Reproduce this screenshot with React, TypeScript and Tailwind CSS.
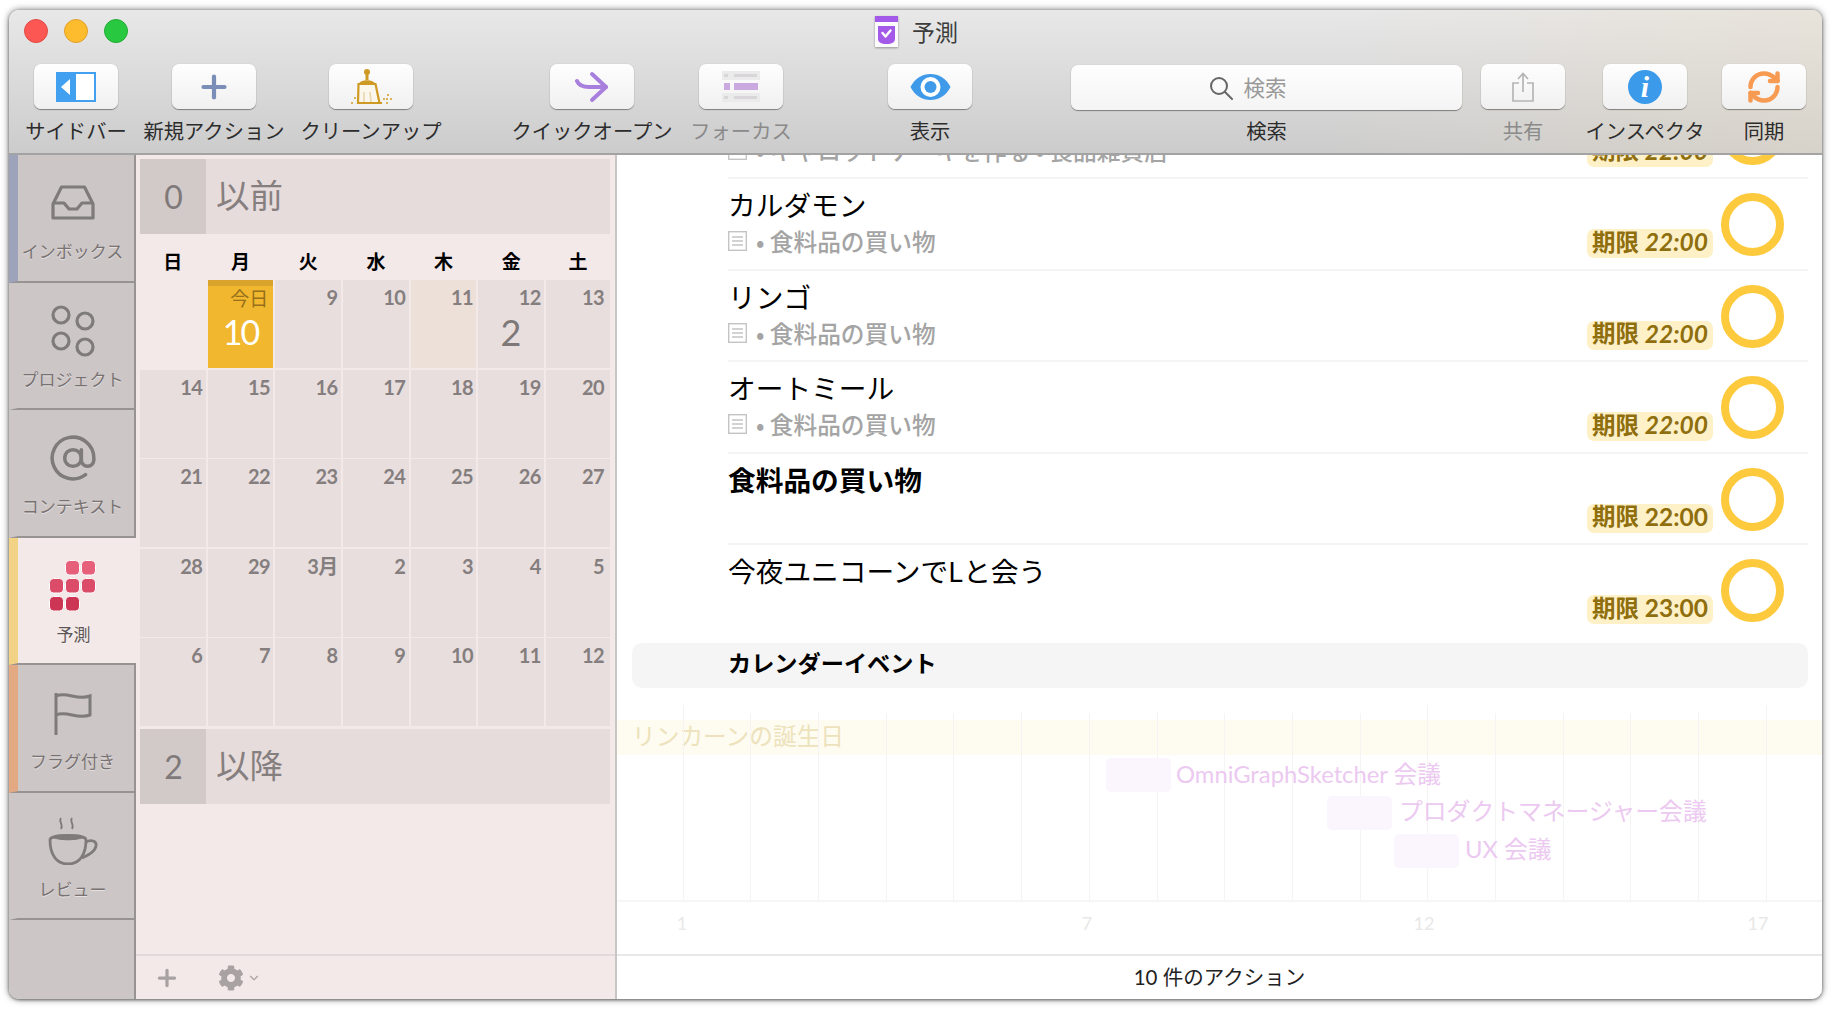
import React from "react";
import { AtSign, ChevronDown, Plus, RefreshCw } from "lucide-react";
import { FaCog } from "react-icons/fa";

const NUM = "font-['Lato','Noto_Sans_CJK_JP',sans-serif]";

function SidebarGlyph() {
  return (
    <svg width="40" height="30" viewBox="0 0 40 30">
      <rect width="40" height="30" fill="#42a0f0" />
      <rect x="20" y="2" width="18" height="26" fill="#fff" />
      <path d="M14 7v16L5 15z" fill="#fff" />
    </svg>
  );
}
function Broom() {
  return (
    <svg width="42" height="37" viewBox="0 0 42 37" fill="none">
      <circle cx="17" cy="4" r="3" fill="#cf9a24" />
      <rect x="15.5" y="4" width="3" height="8" fill="#cf9a24" />
      <path d="M9 16c1-5 15-5 16 0z" fill="#cf9a24" />
      <path d="M8.5 16h17l4 19H8z" stroke="#cf9a24" strokeWidth="2.2" fill="#fbf7ec" />
      <path d="M14 24v10M20 24l1 10" stroke="#e6d6a8" strokeWidth="1.5" />
      <path d="M7 35h25" stroke="#cf9a24" strokeWidth="2" />
      <g fill="#dcb256">
        <rect x="1" y="34" width="2" height="2" /><rect x="4" y="29" width="2" height="2" />
        <rect x="33" y="30" width="2" height="2" /><rect x="36" y="34" width="2" height="2" />
        <rect x="37" y="26" width="2" height="2" /><rect x="40" y="30" width="2" height="2" />
        <rect x="36" y="30" width="2" height="2" />
      </g>
    </svg>
  );
}
function QuickArrow() {
  return (
    <svg width="34" height="32" viewBox="0 0 34 32" fill="none" stroke="#a87fdc" strokeWidth="4" strokeLinecap="round" strokeLinejoin="round">
      <path d="M2 10c2 5 6 6 12 6h17" />
      <path d="M17 3l14 13-14 13" />
    </svg>
  );
}
function FocusGlyph() {
  return (
    <svg width="38" height="31" viewBox="0 0 38 31">
      <rect width="38" height="9" fill="#ecebec" />
      <rect x="12" y="3" width="23" height="3" fill="#d8d6d8" />
      <rect x="2" y="3" width="4" height="3" fill="#d8d6d8" />
      <rect x="2" y="12" width="6" height="7" fill="#c9a9df" />
      <rect x="12" y="12" width="24" height="7" fill="#c9a9df" />
      <rect y="22" width="38" height="9" fill="#ecebec" />
      <rect x="12" y="25" width="23" height="3" fill="#d8d6d8" />
      <rect x="2" y="25" width="4" height="3" fill="#d8d6d8" />
    </svg>
  );
}
function Eye() {
  return (
    <svg width="41" height="26" viewBox="0 0 41 26">
      <path d="M.5 13C9-4.300 32-4.300 40.500 13 32 30.300 9 30.300.5 13z" fill="#3f9bea" />
      <circle cx="20.500" cy="13" r="10" fill="#fff" />
      <circle cx="20.500" cy="13" r="6" fill="#3f9bea" />
    </svg>
  );
}
function Magnifier() {
  return (
    <svg width="24" height="24" viewBox="0 0 24 24" fill="none" stroke="#666" strokeWidth="2">
      <circle cx="10" cy="10" r="8" />
      <path d="M16 16l7 7" strokeLinecap="round" />
    </svg>
  );
}
function Share() {
  return (
    <svg width="22" height="30" viewBox="0 0 22 30" fill="none" stroke="#b5b5b5" strokeWidth="1.700">
      <path d="M7 11H1v18h20V11h-6" />
      <path d="M11 20V2M6 7l5-5.500L16 7" />
    </svg>
  );
}
function DocIcon() {
  return (
    <svg width="23" height="31" viewBox="0 0 23 31" className="drop-shadow-[0_1px_1px_rgba(0,0,0,0.35)]">
      <rect width="23" height="31" fill="#fbfbfb" />
      <rect width="23" height="6" fill="#a45ae8" />
      <path d="M3 10h17v13c0 3-3 5-8.500 5S3 26 3 23z" fill="#a45ae8" />
      <path d="M7.500 17l3 3.500 5-6" fill="none" stroke="#fff" strokeWidth="2.400" strokeLinecap="round" strokeLinejoin="round" />
    </svg>
  );
}
function Inbox() {
  return (
    <svg width="44" height="36" viewBox="0 0 44 36" fill="none" stroke="#7f7b7b" strokeWidth="3.200" strokeLinejoin="round">
      <path d="M2 19L10.500 2h23L42 19v14H2z" />
      <path d="M2 18h11l5 6h8l5-6h11" />
    </svg>
  );
}
function Projects() {
  return (
    <svg width="44" height="52" viewBox="0 0 44 52" fill="none" stroke="#7f7b7b" strokeWidth="3.200">
      <circle cx="10" cy="10" r="8" />
      <circle cx="34" cy="16" r="8" />
      <circle cx="10" cy="36" r="8" />
      <circle cx="34" cy="42" r="8" />
    </svg>
  );
}
function ForecastGrid() {
  const cells = [
    [16, 0, "#e7607a"], [32, 0, "#e7607a"],
    [0, 18, "#da4c67"], [16, 18, "#da4c67"], [32, 18, "#da4c67"],
    [0, 36, "#cc3553"], [16, 36, "#cc3553"],
  ] as const;
  return (
    <svg width="47" height="51" viewBox="0 0 47 51" className="-ml-[3px]">
      {cells.map(([x, y, c]) => (
        <rect key={`${x}-${y}`} x={x + 0.5} y={y + 0.5} width="14" height="14.500" rx="4" fill={c} stroke="#fff" strokeWidth="1" />
      ))}
    </svg>
  );
}
function Flag() {
  return (
    <svg width="38" height="43" viewBox="0 0 38 43" fill="none" stroke="#7f7b7b" strokeWidth="3">
      <path d="M2 1v42" />
      <path d="M2 4c11-5 21 5 34 0v19c-13 5-23-5-34 0" />
    </svg>
  );
}
function Cup() {
  return (
    <svg width="50" height="48" viewBox="0 0 50 48" fill="none" stroke="#7f7b7b" strokeWidth="2.800">
      <path d="M13 1c-3 4 3 6 0 11M24 1c-3 4 3 6 0 11" strokeWidth="1.800" />
      <path d="M2 23c0-6 36-6 36 0 0 14-6 24-18 24S2 37 2 23z" />
      <path d="M5 21c6-4 24-4 30 0-6 3-24 3-30 0z" fill="#7f7b7b" stroke="none" />
      <path d="M38 25c5-3 11-1 10 4-1 6-8 9-14 12" />
    </svg>
  );
}

function ToolItem({ label, icon, ml, dim }: { label: string; icon: React.ReactNode; ml: string; dim?: boolean }) {
  return (
    <div className={`flex w-[84px] shrink-0 flex-col items-center ${ml}`}>
      <div className="flex h-[45px] w-[84px] items-center justify-center rounded-[7px] bg-[linear-gradient(180deg,#fefefe,#f0f0f0)] shadow-[0_1px_1px_rgba(0,0,0,0.4),0_0_1px_rgba(0,0,0,0.2)]">
        {icon}
      </div>
      <div className={`mt-[9px] whitespace-nowrap text-[20.300px] leading-[24px] ${dim ? "text-[#8a8a8a]" : "text-[#2c2c2c]"}`}>{label}</div>
    </div>
  );
}

function Toolbar() {
  return (
    <div className="h-[145px] shrink-0 border-b-2 border-[#a3a3a3] bg-[linear-gradient(90deg,rgba(0,0,0,0)_72%,rgba(232,220,198,0.4)_100%),linear-gradient(180deg,#e8e8e9,#cccccc)]">
      <div className="grid h-[54px] grid-cols-[1fr_auto_1fr] pt-[6px]">
        <div className="flex gap-[16px] pl-[15px] pt-[3px]">
          <div className="h-[24px] w-[24px] rounded-full border border-[#e14942] bg-[#fc5753]" />
          <div className="h-[24px] w-[24px] rounded-full border border-[#e0a028] bg-[#fdbc2e]" />
          <div className="h-[24px] w-[24px] rounded-full border border-[#20ab36] bg-[#28c940]" />
        </div>
        <div className="flex items-start gap-[14px] pl-[2px]">
          <DocIcon />
          <span className="text-[23px] leading-[30px] text-[#3c3c3c]">予測</span>
        </div>
        <div />
      </div>
      <div className="flex pl-[25px]">
        <ToolItem ml="" label="サイドバー" icon={<SidebarGlyph />} />
        <ToolItem ml="ml-[54px]" label="新規アクション" icon={<Plus size={36} strokeWidth={2.800} color="#7b8eb8" />} />
        <ToolItem ml="ml-[73px]" label="クリーンアップ" icon={<Broom />} />
        <ToolItem ml="ml-[137px]" label="クイックオープン" icon={<QuickArrow />} />
        <ToolItem ml="ml-[65px]" label="フォーカス" dim icon={<FocusGlyph />} />
        <ToolItem ml="ml-[105px]" label="表示" icon={<Eye />} />
        <div className="ml-[99px] flex w-[391px] shrink-0 flex-col items-center">
          <div className="mt-[1px] flex h-[45px] w-[391px] items-center justify-center gap-[10px] rounded-[7px] bg-[linear-gradient(180deg,#fefefe,#f4f4f4)] pr-[37px] shadow-[0_1px_1px_rgba(0,0,0,0.4),0_0_1px_rgba(0,0,0,0.2)]">
            <Magnifier />
            <span className="text-[21.500px] text-[#9a9a9a]">検索</span>
          </div>
          <div className="mt-[8px] text-[20.300px] leading-[24px] text-[#2c2c2c]">検索</div>
        </div>
        <ToolItem ml="ml-[19px]" label="共有" dim icon={<Share />} />
        <ToolItem ml="ml-[38px]" label="インスペクタ" icon={
          <span className="flex h-[34px] w-[34px] items-center justify-center rounded-full bg-[#3b9aea] font-['Liberation_Serif',serif] text-[30px] font-bold italic leading-none text-white">i</span>
        } />
        <ToolItem ml="ml-[35px]" label="同期" icon={<RefreshCw size={36} strokeWidth={3} color="#f79a52" />} />
      </div>
    </div>
  );
}

function Tab({ label, icon, strip, active }: { label: string; icon: React.ReactNode; strip: string; active?: boolean }) {
  return (
    <div className={`flex h-[127.500px] w-[127px] shrink-0 flex-col items-center border-b-2 border-b-[#979393] border-l-[9px] pr-[7px] pt-[17px] ${strip} ${active ? "bg-[#f3e9e8]" : "border-r-2 border-r-[#979393] bg-[#cdc6c6]"}`}>
      <div className="flex h-[62px] items-center justify-center">{icon}</div>
      <div className={`mt-[6px] whitespace-nowrap text-[17px] leading-[22px] [text-shadow:0_1px_0_rgba(255,255,255,0.5)] ${active ? "text-[#5c5656]" : "text-[#787272]"}`}>{label}</div>
    </div>
  );
}

function Sidebar() {
  return (
    <div className="flex w-[127px] shrink-0 flex-col bg-[#cdc6c6]">
      <Tab label="インボックス" icon={<Inbox />} strip="border-l-[#9ca3bb]" />
      <Tab label="プロジェクト" icon={<Projects />} strip="border-l-[#cdc6c6]" />
      <Tab label="コンテキスト" icon={<AtSign size={50} strokeWidth={1.700} color="#7f7b7b" />} strip="border-l-[#cdc6c6]" />
      <Tab label="予測" active icon={<ForecastGrid />} strip="border-l-[#f2d285]" />
      <Tab label="フラグ付き" icon={<Flag />} strip="border-l-[#e2a982]" />
      <Tab label="レビュー" icon={<Cup />} strip="border-l-[#cdc6c6]" />
      <div className="flex-1 border-r-2 border-r-[#979393]" />
    </div>
  );
}

const weekdays = ["日", "月", "火", "水", "木", "金", "土"];
const dates = [
  "", "今日", "9", "10", "11", "12", "13",
  "14", "15", "16", "17", "18", "19", "20",
  "21", "22", "23", "24", "25", "26", "27",
  "28", "29", "3月", "2", "3", "4", "5",
  "6", "7", "8", "9", "10", "11", "12",
];
const COLS = "grid-cols-[65.700px_65.700px_65.700px_65.700px_65.700px_65.700px_minmax(0,1fr)]";

function DayCell({ value, index }: { value: string; index: number }) {
  if (index === 0) return <div />;
  if (index === 1) {
    return (
      <div className="border-t-[6px] border-[#d9a32c] bg-[#f1b82f] pr-[5px] text-right">
        <div className="h-[23px] text-[19px] leading-[23px] text-[#96701a]">今日</div>
        <div className={`mt-[4px] pl-[5px] text-center text-[34px] leading-[38px] tracking-[-2px] text-white ${NUM}`}>10</div>
      </div>
    );
  }
  const tint = index === 4 ? "bg-[#ece0d9]" : "bg-[#e8dede]";
  const pad = index % 7 === 6 ? "pr-[6px]" : "pr-[3.500px]";
  return (
    <div className={`${tint} ${pad} pt-[5px] text-right ${NUM}`}>
      <div className="text-[20px] font-bold leading-[24px] tracking-[-0.6px] text-[#857e7e]">{value}</div>
      {index === 5 && <div className="mt-[4px] pl-[3px] text-center text-[36px] leading-[38px] text-[#7e7878]">2</div>}
    </div>
  );
}

function Band({ n, label, className }: { n: string; label: string; className?: string }) {
  return (
    <div className={`flex h-[75px] ${className ?? ""}`}>
      <div className={`flex w-[66px] items-center justify-center pl-[1px] text-[32px] text-[#7f7979] ${NUM}`}>{n}</div>
      <div className="pl-[10px] text-[33.500px] leading-[70px] text-[#867f7f]">{label}</div>
    </div>
  );
}

function Forecast() {
  return (
    <div className="flex w-[481px] shrink-0 flex-col border-r-2 border-[#c9c5c5] bg-[#f3e9e8]">
      <div className="flex-1 pl-[4px] pr-[5px] pt-[4px]">
        <Band n="0" label="以前" className="bg-[linear-gradient(90deg,#d2c9c9_66px,#e7dcdc_66px)]" />
        <div className={`grid h-[46px] ${COLS} gap-x-[2px] pt-[8px]`}>
          {weekdays.map((d) => (
            <div key={d} className="flex items-center justify-center text-[19px] font-bold text-black">{d}</div>
          ))}
        </div>
        <div className={`grid auto-rows-[88px] ${COLS} gap-x-[2px] gap-y-[1.500px]`}>
          {dates.map((d, i) => (
            <DayCell key={i} value={d} index={i} />
          ))}
        </div>
        <Band n="2" label="以降" className="mt-[3px] bg-[linear-gradient(90deg,#d2c9c9_66px,#e7dcdc_66px)]" />
      </div>
      <div className="flex h-[45px] shrink-0 items-center border-t-2 border-[#e2dada] pl-[18px]">
        <Plus size={26} strokeWidth={3} color="#a8a2a2" />
        <FaCog size={26} color="#a8a2a2" className="ml-[38px]" />
        <ChevronDown size={14} strokeWidth={2} color="#a8a2a2" className="ml-[3px]" />
      </div>
    </div>
  );
}

function Note() {
  return (
    <svg width="19" height="20" viewBox="0 0 19 20" fill="none" stroke="#c4c4c4" strokeWidth="1.400" className="shrink-0">
      <rect x=".7" y=".7" width="17.600" height="18.600" />
      <path d="M4 6h11M4 10h11M4 14h11" />
    </svg>
  );
}

function Row({ title, sub, time, bold, italic = true, noLine }: { title?: string; sub?: string; time: string; bold?: boolean; italic?: boolean; noLine?: boolean }) {
  return (
    <div className={`flex h-[91.500px] shrink-0 ${noLine ? "" : "border-b-2 border-[#f4f4f4]"}`}>
      <div className="min-w-0 flex-1">
        <div className={`mt-[7px] h-[36px] text-[27.700px] leading-[36px] text-black ${bold ? "font-bold" : ""}`}>{title}</div>
        {sub && (
          <div className="mt-[4px] flex h-[30px] items-center">
            <Note />
            <span className="ml-[9px] text-[23.700px] font-medium leading-[30px] text-[#a4a4a4]">• {sub}</span>
          </div>
        )}
      </div>
      <div className={`mt-[50px] flex h-[29px] items-center self-start rounded-[7px] bg-[#fef1c8] px-[5px] pb-[2px] text-[23.500px] font-semibold text-[#8f6e0d] ${NUM}`}>
        <span>期限&nbsp;</span>
        <span className={`text-[24.500px] font-bold ${italic ? "italic" : ""}`}>{time}</span>
      </div>
      <div className="ml-[8px] mr-[24px] mt-[14px] h-[63px] w-[63px] shrink-0 rounded-full border-[8px] border-[#fdc93d]" />
    </div>
  );
}

const gridLines = Array.from({ length: 17 }, (_, i) => ({
  x: 65.600 + i * 67.700,
  long: i === 0 || i === 11 || i === 16,
}));
const axis = [
  { x: 65, t: "1" },
  { x: 470, t: "7" },
  { x: 807, t: "12" },
  { x: 1141, t: "17" },
];
const events = [
  { box: 489, top: 70, text: 559, y: 69, label: "OmniGraphSketcher 会議" },
  { box: 710, top: 108, text: 782, y: 106, label: "プロダクトマネージャー会議" },
  { box: 777, top: 146, text: 848, y: 144, label: "UX 会議" },
];

function Timeline() {
  return (
    <div className={`relative flex-1 ${NUM}`}>
      <div className="absolute left-0 right-0 top-[32px] h-[35px] bg-[#fefcf1] pl-[15px] text-[23.700px] leading-[32px] text-[#ede2bb]">リンカーンの誕生日</div>
      {gridLines.map((l) => (
        <div key={l.x} className="absolute w-[1px] bg-[#f4f4f4]" style={{ left: l.x, top: l.long ? 17 : 25, height: l.long ? 195 : 187 }} />
      ))}
      {events.map((e) => (
        <React.Fragment key={e.label}>
          <div className="absolute h-[34px] w-[65px] rounded-[5px] bg-[#fbf5fd]" style={{ left: e.box, top: e.top }} />
          <div className="absolute whitespace-nowrap text-[23.800px] leading-[34px] text-[#ecc9f1]" style={{ left: e.text, top: e.y }}>{e.label}</div>
        </React.Fragment>
      ))}
      <div className="absolute left-0 right-0 top-[212px] h-[2px] bg-[#f6f6f6]" />
      {axis.map((a) => (
        <div key={a.t} className="absolute top-[224px] -translate-x-1/2 text-[18px] leading-[22px] text-[#e8e8e8]" style={{ left: a.x }}>{a.t}</div>
      ))}
    </div>
  );
}

function Detail() {
  return (
    <div className="flex min-w-0 flex-1 flex-col overflow-hidden bg-white">
      <div className="flex min-h-0 flex-1 flex-col overflow-hidden">
        <div className="mt-[-67.500px] flex flex-col pl-[111px] pr-[14px]">
          <Row sub="キャロットケーキを作る • 食品雑貨店" time="22:00" />
          <Row title="カルダモン" sub="食料品の買い物" time="22:00" />
          <Row title="リンゴ" sub="食料品の買い物" time="22:00" />
          <Row title="オートミール" sub="食料品の買い物" time="22:00" />
          <Row title="食料品の買い物" bold italic={false} time="22:00" />
          <Row title="今夜ユニコーンでLと会う" time="23:00" italic={false} noLine />
        </div>
        <div className="ml-[15px] mr-[14px] mt-[6.500px] h-[45px] shrink-0 rounded-[10px] bg-[#f5f5f5] pl-[96px] text-[23.200px] font-bold leading-[38px] text-black">カレンダーイベント</div>
        <Timeline />
      </div>
      <div className={`flex h-[45px] shrink-0 items-center justify-center border-t-2 border-[#e8e8e8] text-[20.500px] text-[#222] ${NUM}`}>10 件のアクション</div>
    </div>
  );
}

export default function App() {
  return (
    <div className="h-[1010px] w-[1832px] overflow-hidden bg-white pl-[9px] pt-[10px] font-['Noto_Sans_CJK_JP',sans-serif]">
      <div className="flex h-[989px] w-[1813px] flex-col overflow-hidden rounded-[10px] shadow-[0_0_7px_rgba(0,0,0,0.55),0_1px_3px_rgba(0,0,0,0.4)]">
        <Toolbar />
        <div className="flex min-h-0 flex-1">
          <Sidebar />
          <Forecast />
          <Detail />
        </div>
      </div>
    </div>
  );
}
